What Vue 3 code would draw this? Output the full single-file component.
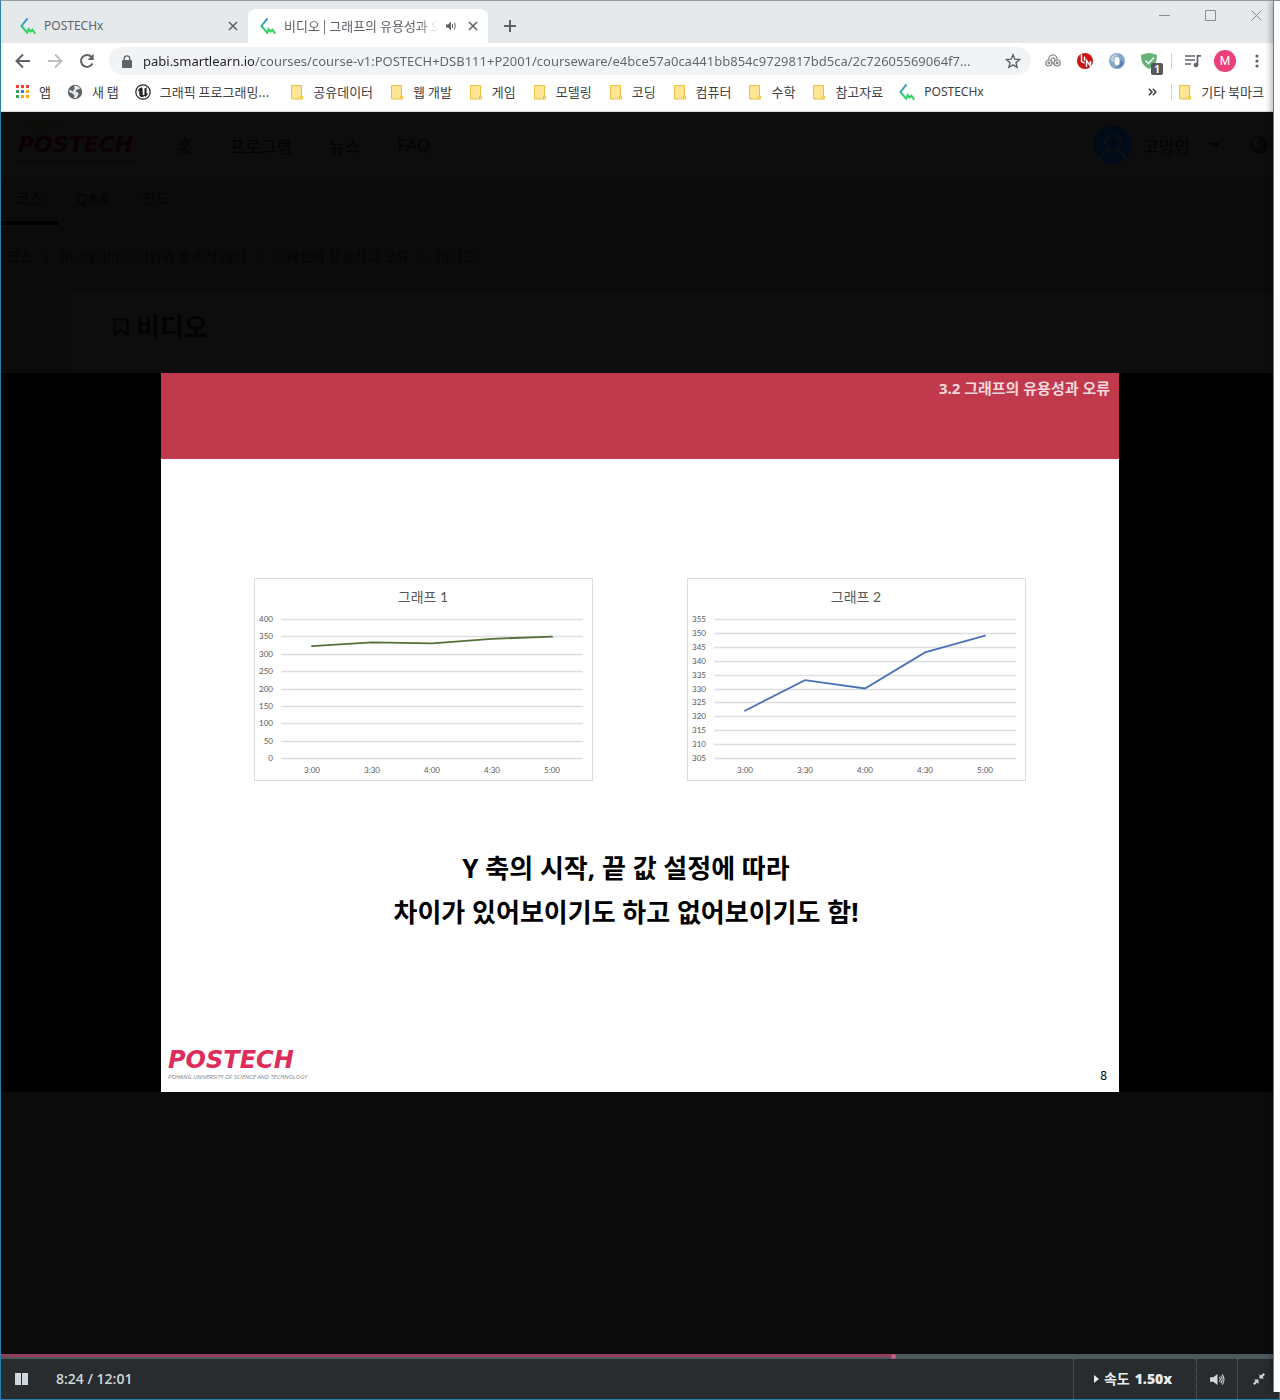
<script setup>
import { ref, computed } from 'vue'

const bookmarks = [
  { label: '앱', icon: 'apps', kind: 'site' },
  { label: '새 탭', icon: 'globe', kind: 'site' },
  { label: '그래픽 프로그래밍...', icon: 'unreal', kind: 'site elided' },
  { label: '공유데이터', icon: 'folder' },
  { label: '웹 개발', icon: 'folder' },
  { label: '게임', icon: 'folder' },
  { label: '모델링', icon: 'folder' },
  { label: '코딩', icon: 'folder' },
  { label: '컴퓨터', icon: 'folder' },
  { label: '수학', icon: 'folder' },
  { label: '참고자료', icon: 'folder' },
  { label: 'POSTECHx', icon: 'postechx', kind: 'site latin' },
]

const menu = ['홈', '프로그램', '뉴스', 'FAQ']
const courseTabs = ['코스', 'Q&A', '진도']
const crumbs = ['코스', 'Ⅲ. 데이터 시각화와 통계적 해석', '그래프의 유용성과 오류', '비디오']

const times = ['3:00', '3:30', '4:00', '4:30', '5:00']
const values = [322, 333, 330, 343, 349]

function buildChart(title, color, min, max, step) {
  const y = (v) => 180 - ((v - min) / (max - min)) * 139
  const ticks = []
  for (let v = max; v >= min; v -= step) ticks.push({ v, y: Math.round(y(v)) })
  const points = values.map((v, i) => `${58 + i * 60},${y(v).toFixed(1)}`).join(' ')
  return { title, color, ticks, points }
}
const charts = [
  buildChart('그래프 1', '#55713a', 0, 400, 50),
  buildChart('그래프 2', '#4a72b8', 305, 355, 5),
]

const url = ref('pabi.smartlearn.io/courses/course-v1:POSTECH+DSB111+P2001/courseware/e4bce57a0ca441bb854c9729817bd5ca/2c72605569064f7...')
const duration = 721
const position = ref(504)
const played = computed(() => ({ '--played': (position.value / duration) * 100 + '%' }))
</script>

<template>
  <div class="window">
    <svg class="defs" aria-hidden="true">
      <defs>
        <linearGradient id="px" x1="0" y1="0" x2="0" y2="1">
          <stop offset="0" stop-color="#3b8fd0" />
          <stop offset="0.5" stop-color="#2bb5a0" />
          <stop offset="0.8" stop-color="#2fd45f" />
        </linearGradient>
        <symbol id="postechx" viewBox="0 0 16 16">
          <path d="M7.5 0.5 1.500 8 7.200 14.800 8.600 11.200 10.600 13.500 12.400 11.800 15.400 15.800" fill="none" stroke="url(#px)" stroke-width="2" />
        </symbol>
        <symbol id="folder" viewBox="0 0 16 16">
          <path d="M2.500 1.500h10v10.500h1v3h-11z" fill="#ffe694" stroke="#e8c240" />
          <path d="M11.500 15v-3h1.500" fill="none" stroke="#e8c240" />
        </symbol>
        <symbol id="apps" viewBox="0 0 16 16">
          <path d="M2 1h3v3H2zM7 1h3v3H7zM12 1h3v3h-3z" fill="#ea4335" />
          <path d="M2 6h3v3H2zM2 11h3v3H2z" fill="#34a05a" />
          <path d="M7 6h3v3H7z" fill="#2a7de8" />
          <path d="M12 6h3v3h-3zM7 11h3v3H7zM12 11h3v3h-3z" fill="#f9ab00" />
        </symbol>
        <symbol id="globe" viewBox="0 0 16 16">
          <circle cx="8" cy="8" r="7.200" fill="currentColor" />
          <path d="M7 1.800c3-.3 5 .9 6 2.500l-1 .9-2.200.2-1.300 2.200 2.600 1 .4 2-2.200 3.300c-1 .3-1.800.2-2.300 0l.5-2.300L5.600 9.600 2.200 8c0-1 .3-1.900.6-2.500l2.900 1.900 1.900-2.600z" fill="#fff" fill-opacity="0.850" />
        </symbol>
        <symbol id="unreal" viewBox="0 0 16 16">
          <circle cx="8" cy="8" r="7.200" fill="#fff" stroke="#222" stroke-width="1.200" />
          <path d="M7.400 3C4.500 3.600 3 5.600 2.800 8c.8-1.300 1.500-1.500 1.500-.8v3.600c0 1.600 2 2.400 3.800 2.300l1-1 1.300.6c1.400-.9 2.400-2.300 2.700-4-.8 1-1.500 1.100-1.500.5V4.600c0-.7.5-1.100.9-1.400-1.300.1-2.900 1.100-3.300 1.900l.3.500v5l-.9.6c-.6-.1-1-.4-1-.8V5.100c0-.8-.5-.9-.9-1 0-.4.3-.8.7-1.100z" fill="#222" />
        </symbol>
        <symbol id="close" viewBox="0 0 10 10">
          <path d="M1 1l8 8M9 1l-8 8" stroke="currentColor" stroke-width="1.600" />
        </symbol>
        <symbol id="speaker" viewBox="0 0 16 14">
          <path d="M0 4.500h3.500L8 1v12L3.500 9.500H0z" fill="currentColor" />
          <path d="M10 4.500q2 2.500 0 5M11.500 3q3.200 4 0 8M13 1.500q4 5.500 0 11" fill="none" stroke="currentColor" stroke-width="1.100" />
        </symbol>
      </defs>
    </svg>

    <header class="browser">
      <div class="tabstrip">
        <div class="tab">
          <svg class="fav"><use href="#postechx" /></svg>
          <span class="tab-title">POSTECHx</span>
          <button class="tab-close" aria-label="탭 닫기"><svg><use href="#close" /></svg></button>
        </div>
        <div class="tab active">
          <svg class="fav"><use href="#postechx" /></svg>
          <span class="tab-title fade">비디오 | 그래프의 유용성과 오류</span>
          <svg class="audio" viewBox="0 0 10 10">
            <path d="M0 3.500h2L5 .5v9l-3-3H0z" fill="currentColor" />
            <path d="M6.500 3v4M8.500 1.500q1.500 3.500 0 7" stroke="currentColor" fill="none" />
          </svg>
          <button class="tab-close" aria-label="탭 닫기"><svg><use href="#close" /></svg></button>
        </div>
        <button class="new-tab" aria-label="새 탭">
          <svg viewBox="0 0 12 12"><path d="M6 0v12M0 6h12" stroke="currentColor" stroke-width="2" /></svg>
        </button>
        <div class="caption-buttons">
          <button aria-label="최소화"><svg viewBox="0 0 11 11"><path d="M0 5.500h11" /></svg></button>
          <button aria-label="최대화"><svg viewBox="0 0 11 11"><path d="M.5.500h10v10H.5z" /></svg></button>
          <button aria-label="닫기"><svg viewBox="0 0 11 11"><path d="M.5.500l10 10M10.500.500l-10 10" /></svg></button>
        </div>
      </div>

      <div class="toolbar">
        <button class="tool" aria-label="뒤로">
          <svg width="16" height="16" viewBox="0 0 16 16"><path d="M15 8H2M8 1.500 1.500 8 8 14.500" class="ln" /></svg>
        </button>
        <button class="tool off" aria-label="앞으로">
          <svg width="16" height="16" viewBox="0 0 16 16"><path d="M1 8h13M8 1.500 14.500 8 8 14.500" class="ln" /></svg>
        </button>
        <button class="tool" aria-label="새로고침">
          <svg width="16" height="16" viewBox="0 0 16 16">
            <path d="M13.400 10.500A6 6 0 1 1 12.400 3.800" class="ln" />
            <path d="M14.700.8v6.200H8.500z" fill="currentColor" />
          </svg>
        </button>
        <div class="omnibox">
          <svg class="lock" viewBox="0 0 10 13">
            <path d="M1 5h8q1 0 1 1v6q0 1-1 1H1q-1 0-1-1V6q0-1 1-1z" fill="currentColor" />
            <path d="M2.300 5.500V3.300a2.700 2.500 0 0 1 5.400 0v2.200" fill="none" stroke="currentColor" stroke-width="1.300" />
          </svg>
          <input v-model="url" class="url" type="text" aria-label="주소창" />
          <button class="star" aria-label="북마크에 추가">
            <svg viewBox="0 0 16 16"><path d="M8 1.800l1.800 4.400 4.800.4-3.600 3.100 1.100 4.600L8 11.800l-4.100 2.500L5 9.700 1.400 6.600l4.800-.4z" fill="none" stroke="currentColor" stroke-width="1.400" /></svg>
          </button>
        </div>
        <button class="tool" aria-label="확장 프로그램">
          <svg width="16" height="16" viewBox="0 0 16 16" fill="none" stroke="#85888b" stroke-width="1.200">
            <circle cx="3.800" cy="10" r="3" /><circle cx="3.800" cy="10" r="0.800" />
            <circle cx="12.200" cy="10" r="3" /><circle cx="12.200" cy="10" r="0.800" />
            <path d="M3.800 7a4.200 4.200 0 1 1 8.200 0M9 8.600a2 2 0 1 0-2.200-.2l3 4" />
          </svg>
        </button>
        <button class="tool" aria-label="확장 프로그램">
          <svg width="16" height="16" viewBox="0 0 16 16">
            <circle cx="8" cy="8" r="8" fill="#cc1412" />
            <path d="M4.500 1.500v7l3 1.500M7.500 3.500v4M9.500 14V7.500l4 5.500V8" fill="none" stroke="#fff" stroke-width="1.400" />
          </svg>
        </button>
        <button class="tool" aria-label="확장 프로그램">
          <svg width="16" height="16" viewBox="0 0 16 16">
            <circle cx="8" cy="8" r="8" fill="#86a6c8" />
            <path d="M1.500 6A7 7 0 0 1 10 1.300C6 2 4 5 4.500 9 3 9 2 8 1.500 6z" fill="#c3d5e6" />
            <path d="M14.500 10A7 7 0 0 1 6 14.700C10 14 12 11 11.500 7c1.500 0 2.500 1 3 3z" fill="#557fae" />
            <ellipse cx="8" cy="8" rx="2.600" ry="4.300" fill="#fff" />
          </svg>
        </button>
        <button class="tool guard" aria-label="광고 차단">
          <svg width="16" height="16" viewBox="0 0 16 16">
            <path d="M8 0c3 0 5 1 8 2 0 7-2 11-8 14C2 13 0 9 0 2 3 1 5 0 8 0z" fill="#67b279" />
            <path d="M4.500 7.500 7.500 10.500 13 4.500" fill="none" stroke="#fff" stroke-width="1.400" />
          </svg>
          <span class="count">1</span>
        </button>
        <span class="divider"></span>
        <button class="tool" aria-label="미디어 제어">
          <svg width="16" height="14" viewBox="0 0 16 14">
            <path d="M0 2h10M0 6h10M0 10h6" stroke="currentColor" stroke-width="1.600" />
            <path d="M12.500 11V1.800H16" fill="none" stroke="currentColor" stroke-width="1.700" />
            <circle cx="11" cy="11" r="2.300" fill="currentColor" />
          </svg>
        </button>
        <button class="tool" aria-label="프로필"><span class="avatar">M</span></button>
        <button class="tool" aria-label="메뉴">
          <svg width="4" height="14" viewBox="0 0 4 14" fill="currentColor"><circle cx="2" cy="2" r="1.600" /><circle cx="2" cy="7" r="1.600" /><circle cx="2" cy="12" r="1.600" /></svg>
        </button>
      </div>

      <nav class="bookmarks">
        <a v-for="b in bookmarks" :key="b.label" href="#" class="bookmark" :class="b.kind">
          <svg><use :href="'#' + b.icon" /></svg>{{ b.label }}
        </a>
        <button class="more" aria-label="더보기">
          <svg viewBox="0 0 9 8"><path d="M.8.8 4 4 .8 7.200M4.800.8 8 4 4.800 7.200" fill="none" stroke="currentColor" stroke-width="1.500" /></svg>
        </button>
        <span class="divider"></span>
        <a href="#" class="bookmark"><svg><use href="#folder" /></svg>기타 북마크</a>
      </nav>
    </header>

    <main class="page">
      <header class="site-head">
        <a href="#" class="site-logo">
          <small class="ko">기치창출대학</small>
          <strong>POSTECH</strong>
          <small>POHANG UNIVERSITY OF SCIENCE AND TECHNOLOGY</small>
        </a>
        <nav class="site-menu"><a v-for="m in menu" :key="m" href="#">{{ m }}</a></nav>
        <div class="account">
          <svg class="face" viewBox="0 0 38 38">
            <circle cx="19" cy="19" r="19" fill="#010a17" />
            <path d="M6 35q4-11 9-11h8q5 0 9 11" fill="none" stroke="#0f1011" stroke-width="2" />
            <circle cx="19" cy="17" r="7.500" fill="#010a17" stroke="#0f1011" stroke-width="2" />
          </svg>
          <span>고명인</span>
          <svg class="caret" viewBox="0 0 10 5"><path d="M0 0h10L5 5z" fill="#020202" /></svg>
          <svg class="world" viewBox="0 0 18 18">
            <circle cx="9" cy="9" r="9" fill="#060606" />
            <path d="M4 3l5-1 1 3-3 3 4 2-2 5-3-4-4-3zM12 3l3 3-2 2z" fill="#0d0d0d" />
          </svg>
        </div>
      </header>

      <nav class="course-tabs">
        <a v-for="(t, i) in courseTabs" :key="t" href="#" :class="{ current: i === 0 }">{{ t }}</a>
      </nav>

      <nav class="crumbs" aria-label="경로">
        <template v-for="(c, i) in crumbs" :key="c">
          <svg v-if="i" viewBox="0 0 5 9"><path d="M.5.500l4 4-4 4" fill="none" stroke="#050505" stroke-width="1.300" /></svg>
          <a href="#">{{ c }}</a>
        </template>
      </nav>

      <div class="unit">
        <svg viewBox="0 0 17 19"><path d="M2 1.500h13v15.500l-6.500-5L2 17z" fill="none" stroke="#020202" stroke-width="2.200" stroke-linejoin="round" /></svg>
        <h1>비디오</h1>
      </div>

      <section class="video">
        <article class="slide">
          <header class="slide-head">3.2 그래프의 유용성과 오류</header>
          <div class="charts">
            <svg v-for="c in charts" :key="c.title" class="chart" viewBox="0 0 339 204" role="img" :aria-label="c.title">
              <rect x="0.500" y="0.500" width="338" height="202" fill="#fff" stroke="#dcdcdf" />
              <text x="169" y="24" class="chart-title">{{ c.title }}</text>
              <g v-for="t in c.ticks" :key="t.v">
                <path :d="`M27 ${t.y + 0.5}H329`" stroke="#dedee2" stroke-width="1.500" />
                <text x="19" :y="t.y + 3" class="tick y">{{ t.v }}</text>
              </g>
              <text v-for="(t, i) in times" :key="t" :x="58 + i * 60" y="195" class="tick x">{{ t }}</text>
              <polyline :points="c.points" fill="none" :stroke="c.color" stroke-width="1.800" stroke-linecap="round" />
            </svg>
          </div>
          <p class="message">Y 축의 시작, 끝 값 설정에 따라<br />차이가 있어보이기도 하고 없어보이기도 함!</p>
          <footer class="slide-foot">
            <div class="slide-logo">
              <strong>POSTECH</strong>
              <small>POHANG UNIVERSITY OF SCIENCE AND TECHNOLOGY</small>
            </div>
            <span class="page-no">8</span>
          </footer>
        </article>
      </section>
    </main>

    <footer class="player">
      <input v-model.number="position" class="seek" :style="played" type="range" min="0" :max="duration" aria-label="재생 위치" />
      <div class="controls">
        <button class="pause" aria-label="일시정지">
          <svg viewBox="0 0 13 12"><path d="M0 0h6v12H0zM7 0h6v12H7z" fill="currentColor" /></svg>
        </button>
        <span class="time">8:24 / 12:01</span>
        <button class="speed">
          <svg viewBox="0 0 5 8"><path d="M0 0l5 4-5 4z" fill="currentColor" /></svg>
          <span>속도</span><b>1.50x</b>
        </button>
        <button class="volume" aria-label="음량"><svg><use href="#speaker" /></svg></button>
        <button class="shrink" aria-label="전체화면 종료">
          <svg viewBox="0 0 12 12" fill="currentColor">
            <path d="M6.500 5.500V1L8 2.500 10.500 0 12 1.500 9.500 4 11 5.500zM5.500 6.500V11L4 9.500 1.500 12 0 10.500 2.500 8 1 6.500z" />
          </svg>
        </button>
      </div>
    </footer>

    <div class="neighbour" aria-hidden="true"></div>
  </div>
</template>

<style>
body {
  margin: 0;
  background: #0b0b0b;
}
</style>

<style scoped>
* {
  box-sizing: border-box;
}
.window {
  position: relative;
  display: flex;
  flex-direction: column;
  min-height: 100vh;
  border: 1px solid #2a7fae;
  border-top-color: #9a9ea3;
  font-family: "Noto Sans", "Noto Sans CJK KR", sans-serif;
}
.defs {
  position: absolute;
  width: 0;
  height: 0;
}
button {
  display: flex;
  align-items: center;
  justify-content: center;
  padding: 0;
  border: 0;
  background: none;
  color: inherit;
  font: inherit;
}
a {
  color: inherit;
  text-decoration: none;
}
.neighbour {
  position: absolute;
  top: 0;
  right: -1px;
  bottom: 7px;
  width: 7px;
  background: #fcfcfc;
  border-left: 1px solid #77797b;
  box-shadow: -2px 0 6px rgba(0, 0, 0, 0.3);
}

/* Browser chrome */
.browser {
  background: #fff;
  color: #5f6368;
  border-bottom: 1px solid #d9dadc;
}
.tabstrip {
  display: flex;
  align-items: flex-end;
  height: 42px;
  padding-left: 7px;
  background: #e6e9ec;
}
.tab {
  display: flex;
  align-items: center;
  width: 240px;
  height: 34px;
  padding: 0 10px 0 12px;
  font-size: 12px;
}
.tab.active {
  background: #fff;
  border-radius: 8px 8px 0 0;
}
.fav {
  flex: none;
  width: 16px;
  height: 16px;
}
.tab-title {
  flex: 1;
  min-width: 0;
  margin: 0 8px;
  overflow: hidden;
  line-height: 20px;
  white-space: nowrap;
}
.fade {
  font-family: "Noto Sans CJK KR", sans-serif;
  font-size: 13px;
  mask-image: linear-gradient(to right, #000 88%, transparent);
}
.audio {
  flex: none;
  width: 10px;
  height: 10px;
  margin-right: 12px;
}
.tab-close svg {
  width: 10px;
  height: 10px;
}
.new-tab {
  width: 44px;
  height: 34px;
}
.new-tab svg {
  width: 12px;
  height: 12px;
}
.caption-buttons {
  display: flex;
  align-self: flex-start;
  margin-left: auto;
}
.caption-buttons button {
  width: 46px;
  height: 28px;
}
.caption-buttons svg {
  width: 11px;
  height: 11px;
  fill: none;
  stroke: #8a8d90;
}
.toolbar {
  display: flex;
  align-items: center;
  height: 36px;
  padding: 0 6px;
}
.tool {
  position: relative;
  flex: none;
  width: 32px;
  height: 28px;
}
.off {
  color: #bcbec1;
}
.ln {
  fill: none;
  stroke: currentColor;
  stroke-width: 2;
}
.omnibox {
  display: flex;
  flex: 1;
  align-items: center;
  min-width: 0;
  height: 28px;
  margin: 0 6px;
  padding: 0 10px 0 13px;
  border-radius: 14px;
  background: #f1f3f4;
}
.lock {
  width: 10px;
  height: 13px;
}
.url {
  flex: 1;
  min-width: 0;
  margin: 0 20px 0 11px;
  padding: 0;
  border: 0;
  outline: 0;
  background: linear-gradient(to right, #202124 111px, #5f6368 111px);
  background-clip: text;
  color: transparent;
  font-family: "Noto Sans", sans-serif;
  font-size: 13px;
}
.star svg {
  width: 16px;
  height: 16px;
}
.count {
  position: absolute;
  right: 2px;
  bottom: 0;
  width: 12px;
  border-radius: 2px;
  background: #55585c;
  color: #fff;
  font-size: 10px;
  font-weight: 700;
  line-height: 12px;
}
.divider {
  flex: none;
  width: 1px;
  height: 16px;
  margin: 0 5px 0 6px;
  background: #cfd1d4;
}
.avatar {
  flex: none;
  width: 22px;
  border-radius: 50%;
  background: #ec407a;
  color: #fff;
  font-family: Roboto, sans-serif;
  font-size: 12px;
  line-height: 22px;
}
.bookmarks {
  display: flex;
  align-items: center;
  height: 32px;
  padding: 0 15px 6px 13px;
  color: #3c4043;
  font-family: "Noto Sans CJK KR", sans-serif;
}
.bookmark {
  display: flex;
  align-items: center;
  gap: 8px;
  margin-right: 16px;
  font-size: 13px;
  line-height: 20px;
  white-space: nowrap;
}
.bookmark.site {
  gap: 9px;
}
.bookmark.elided {
  margin-right: 20px;
}
.bookmark.latin {
  font-family: "Noto Sans", sans-serif;
  font-size: 12px;
}
.bookmark:last-child {
  margin-right: 0;
}
.bookmark svg {
  flex: none;
  width: 16px;
  height: 16px;
  color: #5f6368;
}
.more {
  margin-left: auto;
  margin-right: 8px;
}
.more svg {
  width: 9px;
  height: 8px;
}

/* Dimmed course page */
.page {
  display: flex;
  flex: 1;
  flex-direction: column;
  background: #0b0b0b;
  color: #030303;
}
.site-head {
  display: flex;
  align-items: center;
  height: 66px;
  padding: 0 11px 0 17px;
  background: #0d0d0d;
  font-size: 17px;
}
.site-logo,
.slide-logo {
  display: flex;
  flex-direction: column;
  font-family: "DejaVu Sans", "Noto Sans CJK KR", sans-serif;
  font-style: italic;
  white-space: nowrap;
}
.site-logo {
  width: 127px;
  margin-right: 32px;
}
.site-logo strong {
  color: #0c0003;
  font-size: 22px;
  line-height: 26px;
}
.site-logo small,
.slide-logo small {
  font-family: "Open Sans", "Noto Sans CJK KR", sans-serif;
  font-size: 5px;
  line-height: 8px;
}
.site-logo .ko {
  padding-left: 4px;
  color: #110900;
  font-size: 7px;
}
.site-menu {
  display: flex;
  gap: 37px;
}
.account {
  display: flex;
  align-items: center;
  margin-left: auto;
}
.face {
  width: 38px;
  height: 38px;
  margin-right: 11px;
}
.caret {
  width: 10px;
  height: 5px;
  margin: 0 30px 0 20px;
}
.world {
  width: 18px;
  height: 18px;
}
.course-tabs {
  display: flex;
  gap: 3px;
  height: 47px;
  font-size: 15px;
}
.course-tabs a {
  padding: 0 15px;
  line-height: 40px;
}
.course-tabs .current {
  border-bottom: 4px solid #000;
}
.crumbs {
  display: flex;
  align-items: center;
  gap: 11px;
  height: 66px;
  padding: 0 0 4px 6px;
  color: #050505;
  font-size: 14px;
}
.crumbs svg {
  width: 5px;
  height: 9px;
}
.unit {
  display: flex;
  align-items: center;
  gap: 6px;
  height: 82px;
  margin-left: 71px;
  padding: 0 0 10px 40px;
  background: #0d0d0d;
}
.unit svg {
  width: 18px;
  height: 19px;
}
.unit h1 {
  margin: 0;
  font-size: 26px;
  line-height: 32px;
}

/* Video and slide */
.video {
  background: #000;
}
.slide {
  display: flex;
  flex-direction: column;
  max-width: 958px;
  min-height: 719px;
  margin: 0 auto;
  background: #fff;
  color: #000;
}
.slide-head {
  height: 86px;
  padding: 4px 9px;
  background: #c0394d;
  color: #f6d9dc;
  font-size: 15px;
  font-weight: 700;
  line-height: 22px;
  text-align: right;
}
.charts {
  display: grid;
  grid-template-columns: 1fr 1fr;
  gap: 94px;
  margin-top: 119px;
  padding: 0 93px;
}
.chart {
  display: block;
  width: 100%;
}
.chart-title {
  fill: #595959;
  font-family: Lato, "Noto Sans CJK KR", sans-serif;
  font-size: 14px;
  text-anchor: middle;
}
.tick {
  fill: #595959;
  font-family: Lato, sans-serif;
  font-size: 8px;
}
.tick.y {
  text-anchor: end;
}
.tick.x {
  text-anchor: middle;
}
.message {
  margin: 64px 28px 0 0;
  font-size: 26px;
  font-weight: 700;
  line-height: 44px;
  text-align: center;
}
.slide-foot {
  display: flex;
  align-items: flex-end;
  justify-content: space-between;
  margin-top: auto;
  padding: 0 12px 8px 7px;
}
.slide-logo {
  padding-bottom: 3px;
  color: #7d7f85;
}
.slide-logo strong {
  color: #dc2d5c;
  font-size: 24px;
  line-height: 26px;
}
.slide-logo small {
  font-size: 6px;
}
.page-no {
  font-size: 12px;
  line-height: 16px;
}

/* Player */
.player {
  background: #282c2e;
  color: #cfd8dc;
}
.seek {
  display: block;
  width: 100%;
  height: 5px;
  margin: 0;
  appearance: none;
  background:
    linear-gradient(#933c60, #933c60) 0 0 / var(--played) 3px no-repeat,
    #4f595d;
}
.seek::-webkit-slider-thumb {
  width: 5px;
  height: 5px;
  appearance: none;
  border-radius: 50%;
  background: #cc5a8e;
}
.controls {
  display: flex;
  align-items: center;
  height: 40px;
  font-family: "Open Sans", "Noto Sans CJK KR", sans-serif;
  font-size: 14px;
  line-height: 20px;
}
.pause {
  width: 41px;
  height: 40px;
}
.pause svg {
  width: 13px;
  height: 12px;
}
.time {
  margin-left: 14px;
  font-weight: 600;
}
.controls .speed,
.controls .volume,
.controls .shrink {
  height: 40px;
  border-left: 1px dotted #5c6569;
}
.speed {
  gap: 5px;
  width: 123px;
  margin-left: auto;
  padding-right: 4px;
  color: #e7ecee;
  font-weight: 600;
}
.speed svg {
  width: 5px;
  height: 8px;
}
.volume {
  width: 41px;
}
.volume svg {
  width: 15px;
  height: 13px;
}
.shrink {
  width: 42px;
}
.shrink svg {
  width: 12px;
  height: 12px;
}
</style>
